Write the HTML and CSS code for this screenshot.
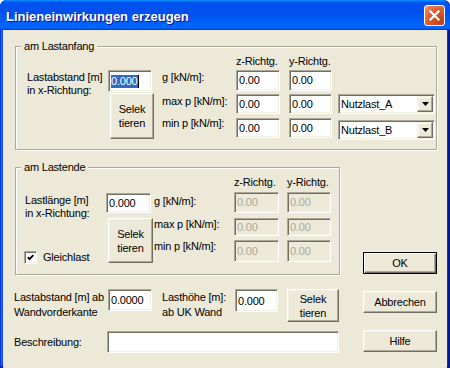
FILE: index.html
```html
<!DOCTYPE html>
<html lang="de">
<head>
    <meta charset="UTF-8">
    <title>Linieneinwirkungen erzeugen</title>
    <link rel="stylesheet" href="styles.css">
</head>
<body>
    <div class="window">
        <div class="titlebar">
            <span class="title">Linieneinwirkungen erzeugen</span>
            <span class="close">
                <svg width="11" height="11" viewBox="0 0 11 11"><path d="M1.5 1.5 L9.5 9.5 M9.5 1.5 L1.5 9.5" stroke="#fff" stroke-width="2.2" stroke-linecap="square"/></svg>
            </span>
        </div>

        <div class="client">
            <!-- Lastanfang -->
            <fieldset class="group group-start">
                <legend>am Lastanfang</legend>
                <div class="grid grid-start">
                    <div class="hdr hz">z-Richtg.</div>
                    <div class="hdr">y-Richtg.</div>

                    <div class="lbl-x">Lastabstand [m]<br>in x-Richtung:</div>
                    <div class="edit edit-x"><span class="sel">0.000</span><span class="caret"></span></div>
                    <div class="lbl-k mt1">g [kN/m]:</div>
                    <div class="edit ez h21">0.00</div>
                    <div class="edit ey h21">0.00</div>

                    <button class="btn btn-sel">Selek<br>tieren</button>
                    <div class="lbl-k mt2">max p [kN/m]:</div>
                    <div class="edit ez h20 mt1">0.00</div>
                    <div class="edit ey h20 mt1">0.00</div>
                    <div class="combo mt1">
                        <span class="combo-text">Nutzlast_A</span>
                        <span class="drop"><svg width="7" height="4" viewBox="0 0 7 4"><path d="M0 0 H7 L3.5 4 Z" fill="#000"/></svg></span>
                    </div>

                    <div class="lbl-k">min p [kN/m]:</div>
                    <div class="edit ez h20 mt1">0.00</div>
                    <div class="edit ey h20 mt1">0.00</div>
                    <div class="combo mt3">
                        <span class="combo-text">Nutzlast_B</span>
                        <span class="drop"><svg width="7" height="4" viewBox="0 0 7 4"><path d="M0 0 H7 L3.5 4 Z" fill="#000"/></svg></span>
                    </div>
                </div>
            </fieldset>

            <div class="lower">
                <div class="lower-main">
                    <!-- Lastende -->
                    <fieldset class="group group-end">
                        <legend>am Lastende</legend>
                        <div class="grid grid-end">
                            <div class="hdr hz">z-Richtg.</div>
                            <div class="hdr">y-Richtg.</div>

                            <div class="lbl-x mt2">Lastlänge [m]<br>in x-Richtung:</div>
                            <div class="edit edit-len">0.000</div>
                            <div class="lbl-k mt3">g [kN/m]:</div>
                            <div class="edit off ez h21">0.00</div>
                            <div class="edit off ey h21">0.00</div>

                            <button class="btn btn-sel btn-sel-end">Selek<br>tieren</button>
                            <div class="lbl-k mt2">max p [kN/m]:</div>
                            <div class="edit off ez h18 mt2">0.00</div>
                            <div class="edit off ey h18 mt2">0.00</div>

                            <label class="checkline">
                                <span class="check"><svg width="7" height="7" viewBox="0 0 7 7"><path d="M0.8 3.2 L2.6 5.2 L6.3 1.2" fill="none" stroke="#000" stroke-width="1.8"/></svg></span>
                                Gleichlast
                            </label>
                            <div class="lbl-k mt1">min p [kN/m]:</div>
                            <div class="edit off ez h22 mt1">0.00</div>
                            <div class="edit off ey h22 mt1">0.00</div>
                        </div>
                    </fieldset>

                    <div class="wall-row">
                        <div class="wall-lbl">Lastabstand [m] ab<br>Wandvorderkante</div>
                        <div class="edit edit-wall">0.0000</div>
                        <div class="wall-lbl wall-lbl2">Lasthöhe [m]:<br>ab UK Wand</div>
                        <div class="edit edit-height">0.000</div>
                        <button class="btn btn-wall">Selek<br>tieren</button>
                    </div>

                    <div class="desc-row">
                        <div class="desc-lbl">Beschreibung:</div>
                        <div class="edit edit-desc"></div>
                    </div>
                </div>

                <div class="actions">
                    <button class="btn btn-action btn-default">OK</button>
                    <button class="btn btn-action">Abbrechen</button>
                    <button class="btn btn-action">Hilfe</button>
                </div>
            </div>
        </div>
    </div>
</body>
</html>
```

FILE: styles.css
```css
* {
    box-sizing: border-box;
}
body {
    margin: 0;
    background: #fff;
    font-family: "Liberation Sans", Arial, sans-serif;
    font-size: 11px;
    color: #000;
}
.window {
    width: 450px;
    height: 368px;
    display: flex;
    flex-direction: column;
    overflow: hidden;
    border-radius: 7px 7px 0 0;
    background: #0831d9;
    box-shadow: inset -1px -1px #00138c, inset 1px 1px #0831d9,
        inset -2px -2px #001ea0, inset 2px 2px #166aee,
        inset -3px -3px #003bda, inset 3px 3px #0855dd;
}

/* title bar */
.titlebar {
    flex: none;
    height: 30px;
    display: flex;
    justify-content: space-between;
    align-items: flex-start;
    padding: 0 5px 0 6px;
    background: linear-gradient(180deg, #0997ff 0%, #0053ee 8%, #0050ee 40%, #0066ff 88%, #0066ff 93%, #005bff 95%, #003dd7 96%, #003dd7 100%);
}
.title {
    margin-top: 9px;
    color: #fff;
    font-size: 13px;
    font-weight: bold;
    line-height: 15px;
    text-shadow: 1px 1px #0f1089;
}
.close {
    width: 21px;
    height: 21px;
    margin-top: 5px;
    display: flex;
    align-items: center;
    justify-content: center;
    border: 1px solid #fff;
    border-radius: 3px;
    background: radial-gradient(circle at 85% 85%, #c93d12 0%, #dc5a2e 55%, #e8825f 85%, #f4b7a0 100%);
}

/* client area */
.client {
    flex: 1;
    margin: 0 3px 4px;
    padding: 10px 0 0 11px;
    background: #ece9d8;
    letter-spacing: -0.2px;
}
.group {
    margin: 0;
    padding: 0;
    min-width: 0;
    border: 1px solid #aca899;
    box-shadow: inset 1px 1px #fff, 1px 1px #fff;
}
.group legend {
    margin-left: 5px;
    padding: 0 3px;
    line-height: 13px;
    background: #ece9d8;
}
.group-start {
    width: 422px;
    margin-left: 1px;
}
.group-end {
    width: 325px;
    margin-left: 1px;
}

.grid {
    display: grid;
    align-items: start;
    line-height: 13px;
}
.grid-start {
    grid-template-columns: 81px 54px 74px 53px 49px 97px;
    grid-template-rows: 17px 23px 24px 24px;
    padding: 0 0 8px 11px;
}
.grid-end {
    grid-template-columns: 81px 48px 80px 53px 49px;
    grid-template-rows: 18px 24px 23px 25px;
    padding: 0 0 10px 9px;
}
.hdr {
    padding-top: 2px;
}
.hz {
    grid-column: 4;
}
.lbl-x {
    grid-column: 1;
    grid-row: span 2;
    margin-top: 1px;
}
.lbl-k {
    grid-column: 3;
}
.mt1 { margin-top: 1px; }
.mt2 { margin-top: 2px; }
.mt3 { margin-top: 3px; }

/* edit fields */
.edit {
    display: flex;
    align-items: center;
    height: 22px;
    padding: 0 2px;
    white-space: nowrap;
    background: #fff;
    border: 1px solid;
    border-color: #aca899 #fff #fff #aca899;
    box-shadow: inset 1px 1px #716f64, inset -1px -1px #f1efe2;
}
.edit.off {
    background: #ece9d8;
    color: #aca899;
}
.ez { width: 44px; }
.ey { width: 43px; }
.grid-end .ez { width: 45px; }
.grid-end .ey { width: 44px; }
.h18 { height: 18px; }
.h20 { height: 20px; }
.h21 { height: 21px; }
.h22 { height: 22px; }
.edit-x {
    width: 44px;
}
.sel {
    background: #316ac5;
    color: #fff;
    line-height: 13px;
}
.caret {
    width: 1px;
    height: 13px;
    background: #000;
}
.edit-len {
    width: 45px;
    height: 20px;
    margin-top: 1px;
}

/* combo boxes */
.combo {
    display: flex;
    align-items: stretch;
    width: 97px;
    height: 20px;
    background: #fff;
    border: 1px solid;
    border-color: #aca899 #fff #fff #aca899;
    box-shadow: inset 1px 1px #716f64, inset -1px -1px #f1efe2;
}
.combo-text {
    flex: 1;
    padding: 0 2px;
    display: flex;
    align-items: center;
}
.drop {
    width: 16px;
    margin: 1px;
    display: flex;
    align-items: center;
    justify-content: center;
    background: #ece9d8;
    border: 1px solid;
    border-color: #f1efe2 #716f64 #716f64 #f1efe2;
    box-shadow: inset -1px -1px #aca899, inset 1px 1px #fff;
}

/* buttons */
.btn {
    padding: 0;
    font: inherit;
    letter-spacing: inherit;
    color: #000;
    line-height: 14px;
    text-align: center;
    background: #ece9d8;
    border: 1px solid;
    border-color: #fff #716f64 #716f64 #fff;
    box-shadow: inset -1px -1px #aca899, inset 1px 1px #f1efe2;
}
.btn-sel {
    grid-column: 2;
    grid-row: span 2;
    width: 44px;
    height: 46px;
    margin-left: 2px;
}
.btn-sel-end {
    width: 45px;
    height: 45px;
    margin-top: 2px;
}
.btn-default {
    border-color: #000;
    box-shadow: inset 1px 1px #fff, inset -1px -1px #716f64, inset -2px -2px #aca899;
}

/* checkbox */
.checkline {
    grid-column: 1;
    display: flex;
    align-items: center;
    gap: 6px;
    margin: 12px 0 0 -1px;
}
.check {
    width: 13px;
    height: 13px;
    display: flex;
    align-items: center;
    justify-content: center;
    background: #fff;
    border: 1px solid;
    border-color: #aca899 #fff #fff #aca899;
    box-shadow: inset 1px 1px #716f64, inset -1px -1px #f1efe2;
}

/* lower part */
.lower {
    display: flex;
    margin-top: 11px;
}
.lower-main {
    width: 326px;
}
.wall-row {
    display: flex;
    align-items: flex-start;
    margin-top: 14px;
}
.wall-lbl {
    width: 94px;
    padding-top: 1px;
    line-height: 15px;
    white-space: nowrap;
}
.wall-lbl2 {
    width: 73px;
    margin-left: 10px;
}
.edit-wall {
    width: 44px;
}
.edit-height {
    width: 43px;
    height: 23px;
}
.btn-wall {
    width: 52px;
    height: 33px;
    margin-left: 9px;
}
.desc-row {
    display: flex;
    align-items: center;
    margin-top: 9px;
}
.desc-lbl {
    width: 93px;
}
.edit-desc {
    width: 232px;
}

.actions {
    display: flex;
    flex-direction: column;
    margin-left: 23px;
    padding-top: 91px;
}
.btn-action {
    width: 74px;
    height: 22px;
    margin-bottom: 17px;
}
```
